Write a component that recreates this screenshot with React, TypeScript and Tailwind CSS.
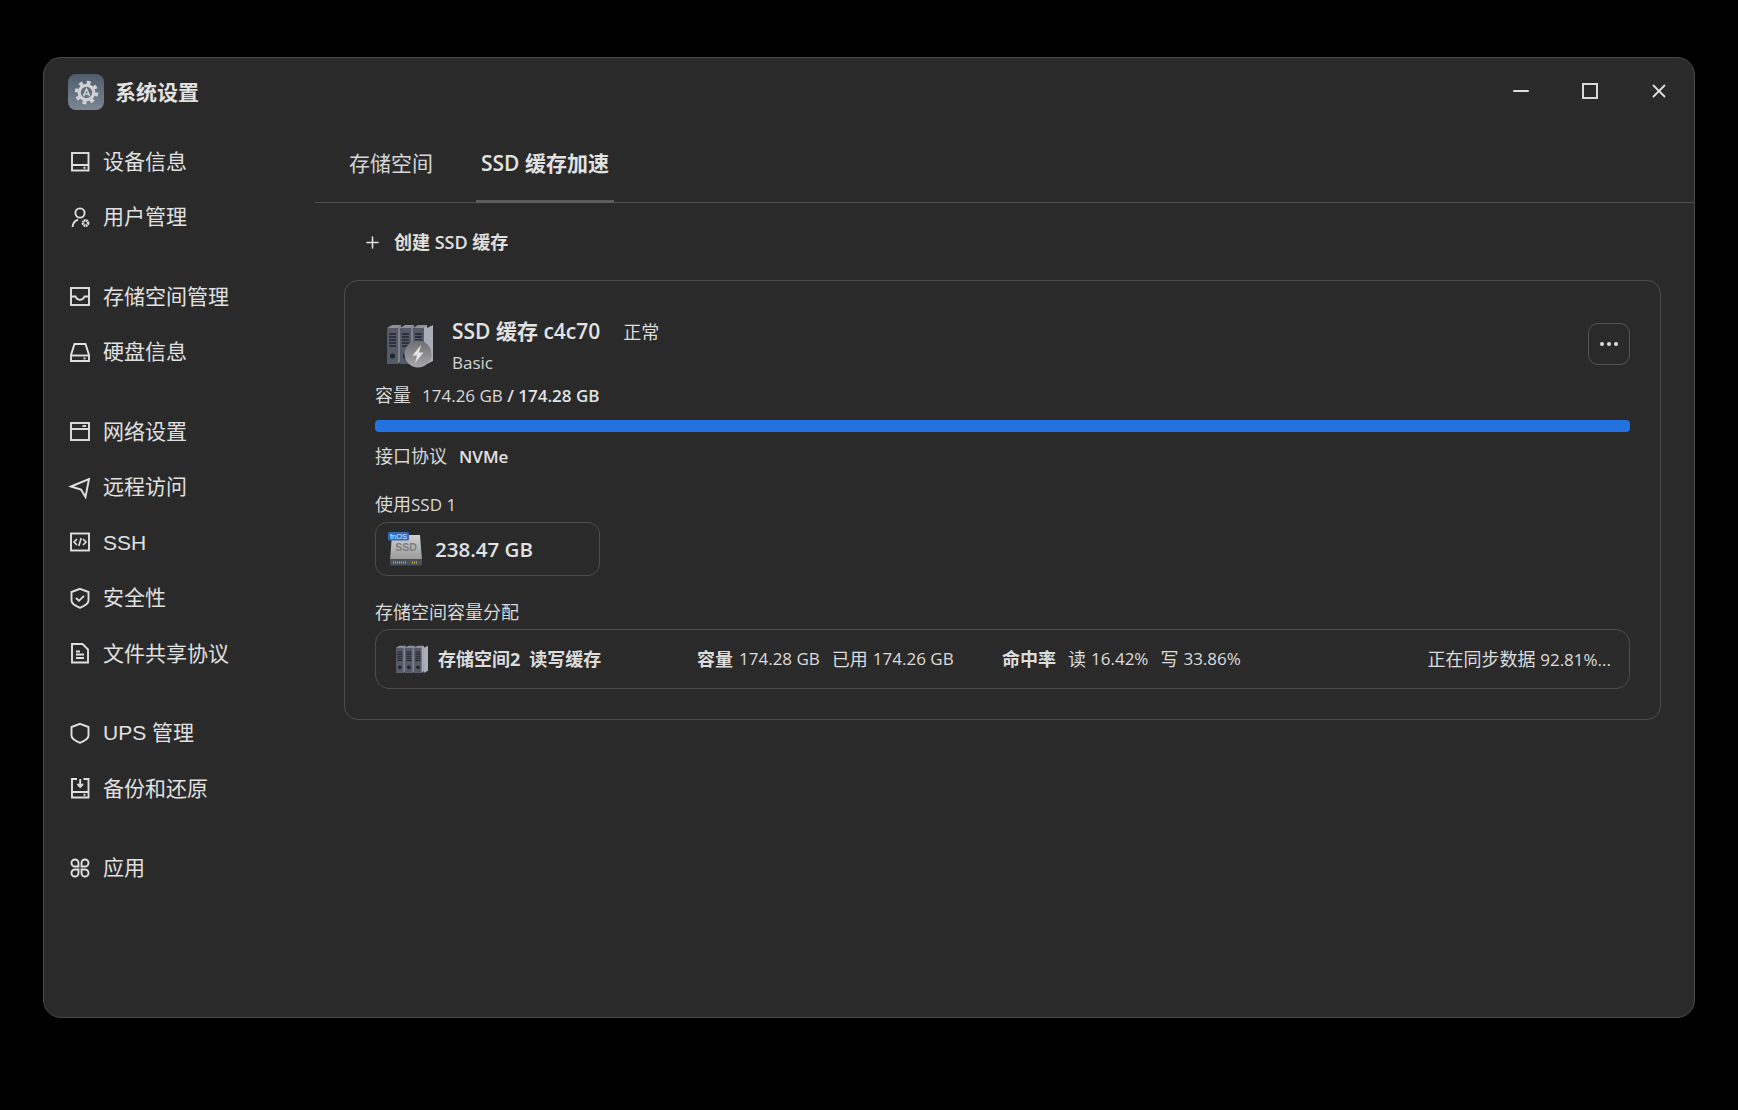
import type { ReactNode } from "react";
import { Minus, Plus, X } from "lucide-react";

const cjk = "font-['Open_Sans','Noto_Sans_CJK_SC',sans-serif]";

function Glyph({ children }: { children: ReactNode }) {
  return (
    <svg viewBox="0 0 24 24" fill="none" stroke="currentColor" strokeWidth="1.9" className="w-6 h-6 shrink-0">
      {children}
    </svg>
  );
}

const icons: Record<string, ReactNode> = {
  device: (
    <>
      <rect x="4" y="4" width="16.5" height="17.5" />
      <path d="M4 16h16.5" />
      <path d="M15.5 18.8h2" />
    </>
  ),
  user: (
    <>
      <circle cx="12" cy="8" r="4.6" />
      <path d="M4.5 22c.3-3.6 2.2-6.2 5.5-7.4" />
      <circle cx="17.5" cy="18" r="2.6" strokeWidth="2.6" strokeDasharray="1.6 .5" />
    </>
  ),
  storage: (
    <>
      <rect x="3" y="4" width="18" height="17" />
      <path d="M3 12.5h4.5c1 2.4 2.6 3.4 4.5 3.4s3.5-1 4.5-3.4H21" />
    </>
  ),
  disk: (
    <>
      <path d="M6.5 4h11L21 15v6H3v-6z" />
      <path d="M3 15.5h18" />
      <path d="M15.5 18.4h2" />
    </>
  ),
  network: (
    <>
      <rect x="3" y="4" width="18" height="17" />
      <path d="M3 10h18" />
      <path d="M14.5 7h3.5" />
    </>
  ),
  remote: <path d="M3 11.5 21 4l-3.5 18-4.5-7.5z" strokeLinejoin="miter" />,
  ssh: (
    <>
      <rect x="3" y="3.5" width="18" height="17" />
      <path d="m9 9-3 3 3 3M15 9l3 3-3 3M13.2 8l-2.4 8" strokeWidth="1.6" />
    </>
  ),
  shield: (
    <>
      <path d="M12 2.8 20.5 6v8.5c0 3-3.5 5.3-8.5 7.3-5-2-8.5-4.3-8.5-7.3V6z" />
      <path d="m8 12 3 2.8 5-5" />
    </>
  ),
  file: (
    <>
      <path d="M4 3h10.5L20 8.5V21.5H4z" />
      <path d="M8 10.5h4M8 13.5h8M8 17h8" />
    </>
  ),
  ups: <path d="M12 2.8 20.5 6v8.5c0 3-3.5 5.3-8.5 7.3-5-2-8.5-4.3-8.5-7.3V6z" />,
  backup: (
    <>
      <path d="M9 3H4v18.5h16.5V3H15.5" />
      <path d="M4 16h16.5M15.5 18.8h2" />
      <path d="M12.2 3v7M9.5 8l2.7 2.8L15 8" />
    </>
  ),
  apps: (
    <path d="M10.5 10.5H7A3.5 3.5 0 1 1 10.5 7zM13.5 10.5H17A3.5 3.5 0 1 0 13.5 7zM10.5 13.5H7A3.5 3.5 0 1 0 10.5 17zM13.5 13.5H17A3.5 3.5 0 1 1 13.5 17z" />
  ),
};

const navGroups = [
  [
    { icon: "device", label: "设备信息" },
    { icon: "user", label: "用户管理" },
  ],
  [
    { icon: "storage", label: "存储空间管理" },
    { icon: "disk", label: "硬盘信息" },
  ],
  [
    { icon: "network", label: "网络设置" },
    { icon: "remote", label: "远程访问" },
    { icon: "ssh", label: "SSH" },
    { icon: "shield", label: "安全性" },
    { icon: "file", label: "文件共享协议" },
  ],
  [
    { icon: "ups", label: "UPS 管理" },
    { icon: "backup", label: "备份和还原" },
  ],
  [{ icon: "apps", label: "应用" }],
];

function AppIcon() {
  return (
    <div className="w-9 h-9 rounded-[8px] bg-gradient-to-b from-[#4f5c6c] to-[#7b8794] flex items-center justify-center">
      <svg viewBox="0 0 24 24" className="w-[25px] h-[25px]" fill="none" stroke="#d0d2d4">
        <circle cx="12" cy="12" r="7" strokeWidth="3" />
        <circle cx="12" cy="12" r="9.6" strokeWidth="3.4" strokeDasharray="3.6 3.94" />
        <path d="M9 15.5 12 8.5l3 7M9.5 13.5h5" strokeWidth="1.4" />
      </svg>
    </div>
  );
}

function ServerIcon({ className }: { className: string }) {
  return (
    <svg viewBox="0 0 46 40" className={className}>
      {[0, 13, 26].map((x) => (
        <g key={x} transform={`translate(${x} 0)`}>
          <path d="M0 4 5 1h9v36l-4 3H0z" fill="#8d919b" />
          <path d="M0 4h11v36H0z" fill="#555a68" />
          <path d="M11 4l3-3v36l-3 3z" fill={x === 26 ? "#a9adb5" : "#7f838d"} />
          <path d="M2 10h7M2 13h7M2 16h7M2 19h7M2 22h7" stroke="#23252c" strokeWidth="1.6" />
          <circle cx="5.5" cy="32" r="2.6" fill="#23252c" />
        </g>
      ))}
      <path d="M40 4l6-3v36l-6 3z" fill="#a9adb5" />
    </svg>
  );
}

function BoltBadge() {
  return (
    <svg viewBox="0 0 28 28" className="absolute left-[17px] top-[16px] w-7 h-7">
      <defs>
        <linearGradient id="bolt-bg" x1="0" y1="0" x2="0" y2="1">
          <stop offset="0" stopColor="#6e6e70" />
          <stop offset="1" stopColor="#a8a8aa" />
        </linearGradient>
      </defs>
      <circle cx="14" cy="14" r="13.5" fill="url(#bolt-bg)" />
      <path d="M17 5 8.5 15.5h4.5L11 23l8.5-10.5H15z" fill="#e4e4e4" />
    </svg>
  );
}

function SsdIcon() {
  return (
    <svg viewBox="0 0 36 36" className="w-9 h-9 shrink-0">
      <defs>
        <linearGradient id="ssd-bg" x1="0" y1="0" x2="0" y2="1">
          <stop offset="0" stopColor="#cfcfcf" />
          <stop offset="1" stopColor="#9a9a9a" />
        </linearGradient>
      </defs>
      <path d="M4 4h28l2 25H2z" fill="url(#ssd-bg)" />
      <path d="M2 28h32v5a1.5 1.5 0 0 1-1.5 1.5h-29A1.5 1.5 0 0 1 2 33z" fill="#4a5058" />
      <path d="M5 31.5h14M24 31.5h6" stroke="#c8a94a" strokeWidth="2" strokeDasharray="1 1" />
      <text x="18" y="20" textAnchor="middle" fontSize="10.5" fontWeight="700" fontFamily="Liberation Sans" fill="#7d7d7d">
        SSD
      </text>
      <rect x="0" y="1" width="21" height="8.5" rx="1.5" fill="#2f6bc0" />
      <text x="10.5" y="8" textAnchor="middle" fontSize="7.5" fontFamily="Liberation Sans" fill="#e8eef8">
        fnOS
      </text>
    </svg>
  );
}

function Sidebar() {
  return (
    <aside className="w-[271px] shrink-0 pt-[16px] pl-[24px]">
      <div className="flex items-center gap-[11px] h-9">
        <AppIcon />
        <span className="mt-[2px] text-[21px] font-bold text-[#e2e2e2]">系统设置</span>
      </div>
      <nav className="mt-[23.5px] flex flex-col gap-6">
        {navGroups.map((group, i) => (
          <div key={i}>
            {group.map((item) => (
              <div key={item.label} className="h-[55.5px] flex items-center gap-[11px] text-[#e0e0e0] text-[21px] font-['Liberation_Sans','Noto_Sans_CJK_SC',sans-serif]">
                <Glyph>{icons[item.icon]}</Glyph>
                <span>{item.label}</span>
              </div>
            ))}
          </div>
        ))}
      </nav>
    </aside>
  );
}

function StorageRow() {
  return (
    <div className="h-[60px] rounded-[14px] border border-[#4c4c4c] flex items-center pl-[20px] pr-[18px] text-[18px] text-[#dcdcdc]">
      <div className="w-[301px] flex items-center gap-[10px] shrink-0">
        <ServerIcon className="w-[32px] h-[28px]" />
        <span className="font-bold">存储空间2</span>
        <span className="font-bold -ml-[1px]">读写缓存</span>
      </div>
      <div className="w-[305px] flex items-center shrink-0">
        <span className="font-bold">容量</span>
        <span className="ml-[6px] text-[17px]">174.28 GB</span>
        <span className="ml-3">已用</span>
        <span className="ml-[5px] text-[17px]">174.26 GB</span>
      </div>
      <div className="flex items-center">
        <span className="font-bold">命中率</span>
        <span className="ml-3">读</span>
        <span className="ml-[5px] text-[17px]">16.42%</span>
        <span className="ml-3">写</span>
        <span className="ml-[5px] text-[17px]">33.86%</span>
      </div>
      <span className="ml-auto">
        正在同步数据 <span className="text-[17px]">92.81%...</span>
      </span>
    </div>
  );
}

function CacheCard() {
  return (
    <section className="mt-[26px] ml-[29px] mr-[33px] h-[440px] rounded-[14px] border border-[#4c4c4c] px-[30px]">
      <div className="flex items-start pt-[35px] h-[102px]">
        <div className="relative w-[46px] h-[52px] ml-[12px] mt-[8px] shrink-0">
          <ServerIcon className="w-[46px] h-[40px]" />
          <BoltBadge />
        </div>
        <div className="ml-[19px]">
          <div className="flex items-baseline h-[26px]">
            <span className="text-[21px] text-[#e2e2e2] font-semibold">SSD 缓存 c4c70</span>
            <span className="ml-[23px] text-[18px] text-[#dcdcdc]">正常</span>
          </div>
          <div className="mt-[9px] text-[17px] text-[#d4d4d4] leading-[24px]">Basic</div>
        </div>
        <button className="ml-auto mt-[7px] w-[42px] h-[42px] rounded-[10px] border border-[#555] flex items-center justify-center gap-[3px]">
          <i className="w-1 h-1 rounded-full bg-[#ddd]" />
          <i className="w-1 h-1 rounded-full bg-[#ddd]" />
          <i className="w-1 h-1 rounded-full bg-[#ddd]" />
        </button>
      </div>
      <div className="text-[18px] text-[#d8d8d8] leading-[24px]">
        容量<span className="ml-[11px] text-[17px]">174.26 GB</span>
        <span className="text-[17px] font-semibold text-[#e2e2e2]"> / 174.28 GB</span>
      </div>
      <div className="mt-[12px] h-3 rounded-[4px] bg-[#2272e0]" />
      <div className="mt-[12px] text-[18px] text-[#d8d8d8] leading-[24px]">
        接口协议<span className="ml-[12px] text-[17px] font-semibold text-[#e2e2e2]">NVMe</span>
      </div>
      <div className="mt-[23px] text-[18px] text-[#d8d8d8] leading-[24px]">
        使用<span className="text-[17px]">SSD 1</span>
      </div>
      <div className="mt-[5px] w-[225px] h-[54px] rounded-[12px] border border-[#4c4c4c] flex items-center pl-[12px] gap-[11px]">
        <SsdIcon />
        <span className="text-[20.5px] font-semibold text-[#e2e2e2]">238.47 GB</span>
      </div>
      <div className="mt-[24px] text-[18px] text-[#d8d8d8] leading-[24px]">存储空间容量分配</div>
      <div className="mt-[5px]">
        <StorageRow />
      </div>
    </section>
  );
}

export default function App() {
  return (
    <div className={`min-h-screen bg-black pt-[57px] pl-[43px] ${cjk}`}>
      <div className="relative w-[1652px] h-[961px] rounded-[18px] border border-[#4a4a4a] bg-[#2a2a2a] flex overflow-hidden">
        <Sidebar />
        <main className="flex-1 min-w-0">
          <div className="h-[145px] border-b border-[#4c4c4c] flex flex-col">
            <div className="h-[43px] flex justify-end items-end gap-[49px] pr-[25px] text-[#dedede]">
              <div className="w-5 h-5 flex items-center justify-center">
                <Minus className="w-6 h-6 shrink-0" />
              </div>
              <div className="w-5 h-5 flex items-center justify-center">
                <div className="w-4 h-4 shrink-0 border-2 border-[#d8d8d8]" />
              </div>
              <div className="w-5 h-5 flex items-center justify-center">
                <X className="w-[22px] h-[22px] shrink-0" />
              </div>
            </div>
            <div className="flex-1 flex items-end pl-[29px] text-[21px]">
              <div className="h-[76px] px-[5px] flex items-center text-[#d6d6d6] mr-[38px]">存储空间</div>
              <div className="h-[76px] px-[5px] flex items-center font-semibold text-[#e2e2e2] border-b-[3px] border-[#5c5c5c] -mb-px">
                SSD 缓存加速
              </div>
            </div>
          </div>
          <div className="mt-[27px] ml-[48px] flex items-center gap-[12px] h-6 text-[18px] font-semibold text-[#e0e0e0]">
            <Plus className="w-[19px] h-[19px]" />
            <span>创建 SSD 缓存</span>
          </div>
          <CacheCard />
        </main>
      </div>
    </div>
  );
}
